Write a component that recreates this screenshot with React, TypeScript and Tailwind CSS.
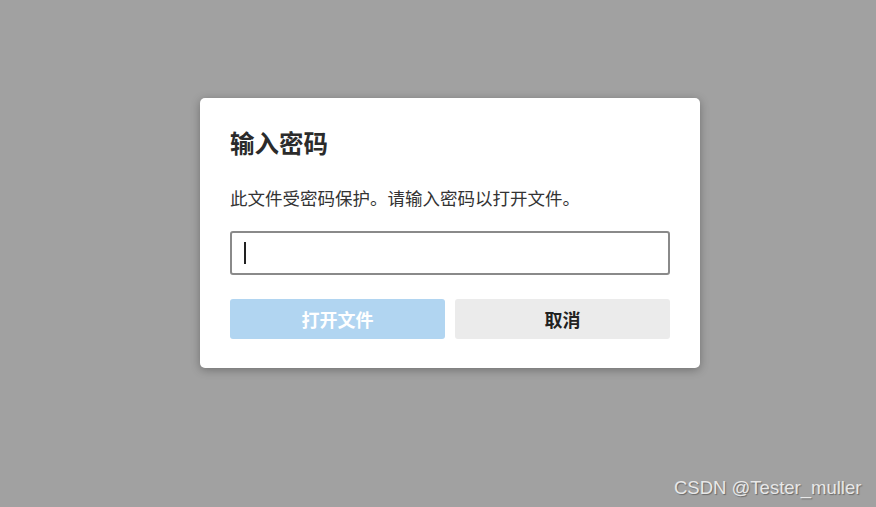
export default function App() {
  const font = { fontFamily: '"Microsoft YaHei", "Noto Sans CJK SC", "Noto Sans", sans-serif' };
  return (
    <div className="relative w-[876px] h-[507px] bg-[#a1a1a1] overflow-hidden" style={font}>
      <div className="pt-[98px] pl-[200px]">
        <div className="w-[500px] h-[270px] bg-white rounded-[5px] shadow-[0_2px_10px_rgba(0,0,0,0.3)] px-[30px] pt-[28px]">
          <h1 className="text-[24.5px] leading-[34px] font-bold text-[#2b2b2b]">输入密码</h1>
          <p className="mt-[26px] text-[17.5px] leading-[24px] text-[#333] whitespace-nowrap">此文件受密码保护。请输入密码以打开文件。</p>
          <div className="mt-[21px] h-[44px] border-2 border-[#8a8a8a] rounded-[3px] flex items-center pl-[12px]">
            <div className="w-[2px] h-[22px] bg-[#222]" />
          </div>
          <div className="mt-[24px] flex gap-[10px]">
            <div className="flex-1 h-[40px] rounded-[3px] bg-[#b1d5f1] flex items-center justify-center text-white font-bold text-[18px]">打开文件</div>
            <div className="flex-1 h-[40px] rounded-[3px] bg-[#ebebeb] flex items-center justify-center text-[#222] font-bold text-[18px]">取消</div>
          </div>
        </div>
      </div>
      <div
        className="absolute left-[674px] top-[476px] text-[18.5px] leading-[24px] text-[#e8e8e8] [text-shadow:1px_1px_1px_rgba(0,0,0,0.35)]"
        style={{ fontFamily: '"Liberation Sans", Arial, sans-serif' }}
      >
        CSDN @Tester_muller
      </div>
    </div>
  );
}
